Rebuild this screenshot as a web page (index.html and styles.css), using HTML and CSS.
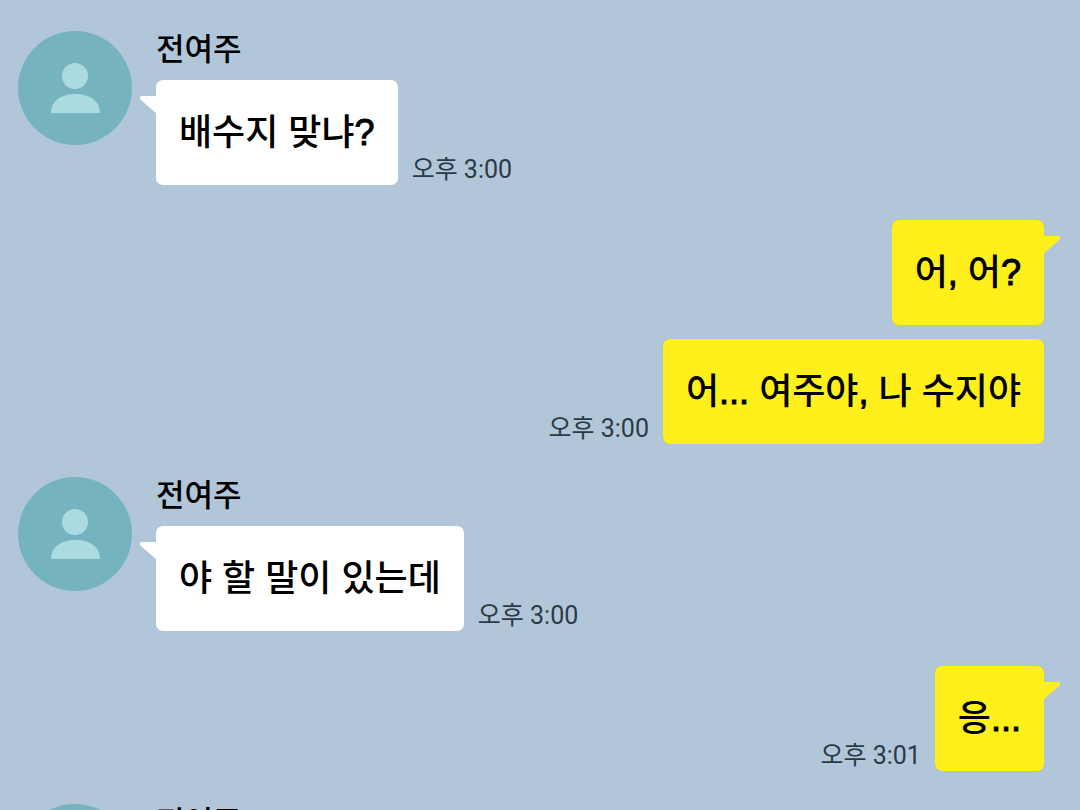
FILE: index.html
```html
<!DOCTYPE html>
<html lang="ko">
<head>
    <meta charset="UTF-8">
    <meta name="viewport" content="width=device-width, initial-scale=1.0">
    <title>전여주</title>
    <link rel="stylesheet" href="styles.css">
</head>
<body>
    <svg class="symbols" aria-hidden="true">
        <symbol id="person" viewBox="0 0 114 114">
            <circle cx="57" cy="45" r="13"/>
            <path d="M33 82C33 70 43 63 57.500 63C72 63 82 70 82 82Z"/>
        </symbol>
        <symbol id="tail" viewBox="0 0 18 18">
            <path d="M18 0H3C1 0 0 2 2 4L18 18Z"/>
        </symbol>
    </svg>

    <main class="chat">
        <section class="group received">
            <svg class="avatar" aria-hidden="true"><use href="#person"/></svg>
            <div class="messages">
                <div class="name">전여주</div>
                <div class="message">
                    <div class="bubble">배수지 맞냐<span class="mark">?</span><svg class="tail" aria-hidden="true"><use href="#tail"/></svg></div>
                    <time class="time">오후 3:00</time>
                </div>
            </div>
        </section>

        <section class="group sent">
            <div class="messages">
                <div class="message">
                    <div class="bubble">어<span class="mark">,</span> 어<span class="mark">?</span><svg class="tail" aria-hidden="true"><use href="#tail"/></svg></div>
                </div>
                <div class="message">
                    <time class="time">오후 3:00</time>
                    <div class="bubble">어<span class="mark">...</span> 여주야<span class="mark">,</span> 나 수지야</div>
                </div>
            </div>
        </section>

        <section class="group received">
            <svg class="avatar" aria-hidden="true"><use href="#person"/></svg>
            <div class="messages">
                <div class="name">전여주</div>
                <div class="message">
                    <div class="bubble">야 할 말이 있는데<svg class="tail" aria-hidden="true"><use href="#tail"/></svg></div>
                    <time class="time">오후 3:00</time>
                </div>
            </div>
        </section>

        <section class="group sent">
            <div class="messages">
                <div class="message">
                    <time class="time">오후 3:01</time>
                    <div class="bubble">응<span class="mark">...</span><svg class="tail" aria-hidden="true"><use href="#tail"/></svg></div>
                </div>
            </div>
        </section>

        <section class="group received">
            <svg class="avatar" aria-hidden="true"><use href="#person"/></svg>
            <div class="messages">
                <div class="name">전여주</div>
            </div>
        </section>
    </main>
</body>
</html>
```
FILE: styles.css
```css
* {
    box-sizing: border-box;
}

body {
    margin: 0;
    background: #b2c6da;
    color: #000;
    font-family: "Liberation Sans", "Noto Sans CJK KR", sans-serif;
    font-weight: 500;
}

.symbols {
    display: none;
}

.chat {
    height: 100vh;
    padding: 31px 36px 0 18px;
    overflow: hidden;
}

.group {
    display: flex;
    gap: 24px;
}

.received {
    margin-bottom: 35px;
}

.sent {
    justify-content: flex-end;
    margin-bottom: 33px;
}

.avatar {
    flex: none;
    width: 114px;
    height: 114px;
    border-radius: 50%;
    background: #75b4bf;
    fill: #abdbe1;
}

.messages {
    display: flex;
    flex-direction: column;
    gap: 14px;
}

.sent .messages {
    align-items: flex-end;
}

.name {
    height: 35px;
    font-size: 31px;
    line-height: 38px;
}

.message {
    display: flex;
    align-items: flex-end;
    gap: 14px;
}

.bubble {
    position: relative;
    padding: 1px 23px 0;
    border-radius: 7px;
    font-size: 36px;
    line-height: 104px;
    white-space: nowrap;
}

.mark {
    -webkit-text-stroke: 1px #000;
}

.received .bubble {
    background: #fff;
    fill: #fff;
}

.sent .bubble {
    background: #fff01c;
    fill: #fff01c;
    box-shadow: 0 0 1px #b3a94e;
}

.tail {
    position: absolute;
    top: 16px;
    left: -17px;
    width: 18px;
    height: 18px;
}

.sent .tail {
    left: auto;
    right: -17px;
    transform: scaleX(-1);
}

.time {
    color: #2b3a45;
    font-family: Roboto, "Noto Sans CJK KR", sans-serif;
    font-size: 25px;
    font-weight: 400;
    line-height: 30px;
    white-space: nowrap;
}
```
